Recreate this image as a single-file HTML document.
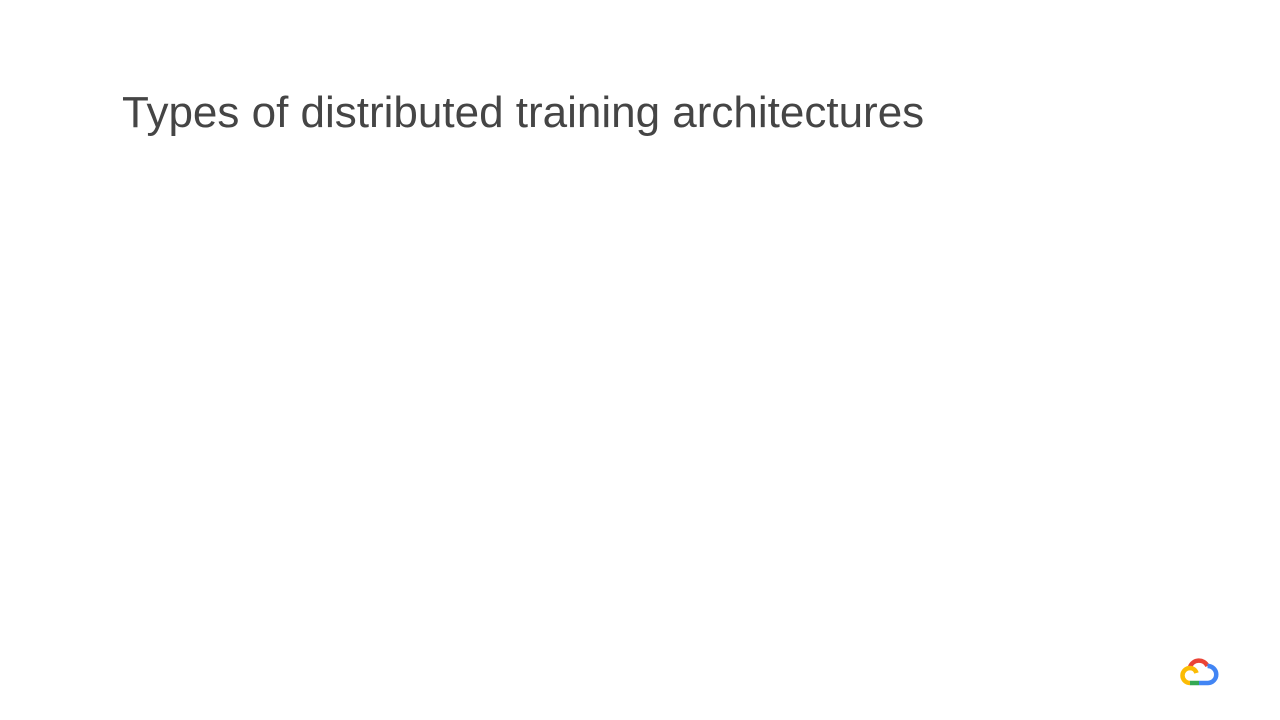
<!DOCTYPE html>
<html><head><meta charset="utf-8"><style>
html,body{margin:0;padding:0;width:1280px;height:720px;background:#fff;overflow:hidden}
.t{position:absolute;left:122px;top:91px;font-family:"Liberation Sans",sans-serif;font-size:44px;line-height:1;color:#454545;white-space:nowrap;font-weight:normal}
svg{position:absolute;left:1179px;top:654px}
</style></head><body>
<div class="t">Types of distributed training architectures</div>
<svg width="40" height="34" viewBox="0 0 40 34">
<path d="M11 13 A9.5 9.5 0 0 1 28.5 12" fill="none" stroke="#ea4335" stroke-width="4.5"/>
<path d="M28.5 12 A8 8 0 0 1 29 29 L20 29" fill="none" stroke="#4285f4" stroke-width="4.5"/>
<path d="M20 29 L11 29" fill="none" stroke="#34a853" stroke-width="4.5"/>
<path d="M11 29 A7.5 7.5 0 0 1 11 14 A7 7 0 0 1 17.5 19" fill="none" stroke="#fbbc05" stroke-width="4.5"/>
</svg>
</body></html>
